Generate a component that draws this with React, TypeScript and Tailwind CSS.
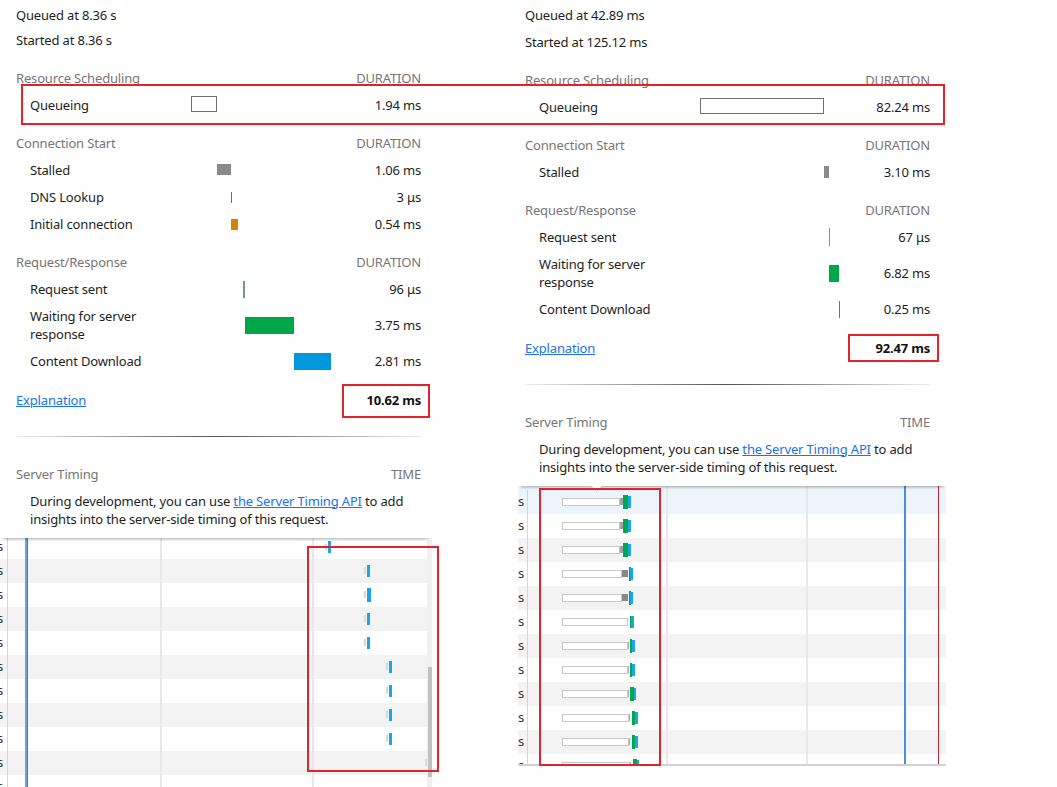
import React from "react";

type Bar = { l: number; w: number; h: number; c?: string; box?: boolean; dy?: number };
type RowData = { label: React.ReactNode; value: string; bars: Bar[] };
type Section = { title: string; rows: RowData[] };

function TimingRow({ r }: { r: RowData }) {
  return (
    <div className="flex items-center py-[4.5px] leading-[18px]">
      <div className="w-[175px] shrink-0 pl-[14px]">{r.label}</div>
      <div className="relative h-[18px] w-[140px] shrink-0">
        {r.bars.map((b, i) =>
          b.box ? (
            <div
              key={i}
              className="absolute top-1/2 border border-[#707070] bg-white"
              style={{ left: b.l, width: b.w, height: b.h, marginTop: -b.h / 2 + (b.dy ?? 0) }}
            />
          ) : (
            <div
              key={i}
              className="absolute top-1/2"
              style={{ left: b.l, width: b.w, height: b.h, marginTop: -b.h / 2 + (b.dy ?? 0), background: b.c }}
            />
          )
        )}
      </div>
      <div className="flex-1 text-right">{r.value}</div>
    </div>
  );
}

function Header({ title, right, mt }: { title: string; right: string; mt: string }) {
  return (
    <div className={`flex justify-between py-[4.5px] leading-[18px] text-[#767676] ${mt}`}>
      <span>{title}</span>
      <span>{right}</span>
    </div>
  );
}

function Popover({
  queued,
  started,
  startedMt,
  sections,
  total,
  pad,
  arrow,
}: {
  queued: string;
  started: string;
  startedMt: string;
  sections: Section[];
  total: string;
  pad: string;
  arrow?: boolean;
}) {
  return (
    <div className={`relative z-10 bg-white pb-[10px] pt-[6px] shadow-[0_4px_3px_-3px_rgba(0,0,0,0.35)] ${pad}`}>
      <div className="w-[405px]">
        <div className="leading-[18px]">{queued}</div>
        <div className={`leading-[18px] ${startedMt}`}>{started}</div>
        {sections.map((s, i) => (
          <div key={i}>
            <Header title={s.title} right="DURATION" mt={i === 0 ? "mt-[15.5px]" : "mt-[11px]"} />
            {s.rows.map((r, j) => (
              <TimingRow key={j} r={r} />
            ))}
          </div>
        ))}
        <div className="mt-[12px] flex justify-between py-[4.5px] leading-[18px]">
          <a className="text-[#1a73e8] underline">Explanation</a>
          <span className="font-bold text-[#111]">{total}</span>
        </div>
        <div className="mt-[22px] h-px w-full bg-linear-to-r from-[#eeeeee] via-[#555555] to-[#eeeeee]" />
        <Header title="Server Timing" right="TIME" mt="mt-[23.5px]" />
        <div className="pl-[14px] pt-[4.5px] leading-[18px]">
          During development, you can use{" "}
          <a className="text-[#1a73e8] underline">the Server Timing API</a> to add
          <br />
          insights into the server-side timing of this request.
        </div>
      </div>
      {arrow && (
        <svg className="absolute bottom-[-7px] left-[72px]" width="13" height="8" viewBox="0 0 13 8">
          <polygon points="0,0 13,0 6.5,7" fill="#ffffff" />
          <path d="M0.5 0.5 L6.5 6.5 L12.5 0.5" fill="none" stroke="#d0d0d0" strokeWidth="1" />
        </svg>
      )}
    </div>
  );
}

const leftSections: Section[] = [
  {
    title: "Resource Scheduling",
    rows: [{ label: "Queueing", value: "1.94 ms", bars: [{ l: 0, w: 26, h: 16, box: true, dy: -1.5 }] }],
  },
  {
    title: "Connection Start",
    rows: [
      { label: "Stalled", value: "1.06 ms", bars: [{ l: 26, w: 14, h: 11, c: "#8a8a8a", dy: -0.5 }] },
      { label: "DNS Lookup", value: "3 μs", bars: [{ l: 40, w: 1, h: 11, c: "#1d8f80" }] },
      { label: "Initial connection", value: "0.54 ms", bars: [{ l: 40, w: 7, h: 11, c: "#d98200" }] },
    ],
  },
  {
    title: "Request/Response",
    rows: [
      { label: "Request sent", value: "96 μs", bars: [{ l: 52, w: 2, h: 17, c: "#6f9a9a" }] },
      {
        label: (
          <>
            Waiting for server
            <br />
            response
          </>
        ),
        value: "3.75 ms",
        bars: [{ l: 54, w: 49, h: 17, c: "#00a748" }],
      },
      { label: "Content Download", value: "2.81 ms", bars: [{ l: 103, w: 37, h: 17, c: "#0097dd" }] },
    ],
  },
];

const rightSections: Section[] = [
  {
    title: "Resource Scheduling",
    rows: [{ label: "Queueing", value: "82.24 ms", bars: [{ l: 0, w: 124, h: 16, box: true, dy: -1 }] }],
  },
  {
    title: "Connection Start",
    rows: [{ label: "Stalled", value: "3.10 ms", bars: [{ l: 124, w: 5, h: 12, c: "#8a8a8a" }] }],
  },
  {
    title: "Request/Response",
    rows: [
      { label: "Request sent", value: "67 μs", bars: [{ l: 129, w: 1, h: 18, c: "#6f9a9a" }] },
      {
        label: (
          <>
            Waiting for server
            <br />
            response
          </>
        ),
        value: "6.82 ms",
        bars: [{ l: 129, w: 10, h: 17, c: "#00a748" }],
      },
      { label: "Content Download", value: "0.25 ms", bars: [{ l: 139, w: 1, h: 17, c: "#0097dd" }] },
    ],
  },
];

type WBar = { l: number; w: number; h: number; c?: string; box?: boolean };

const leftRows: WBar[][] = [
  [
    { l: 317, w: 2, h: 6, c: "#d9d9d9" },
    { l: 320, w: 3, h: 12, c: "#17a5ec" },
  ],
  ...[0, 1, 2, 3].map((i) => [
    { l: 356, w: 2, h: 7, c: "#d9d9d9" },
    { l: 359, w: i === 1 ? 4 : 3, h: i === 1 ? 14 : 12, c: "#17a5ec" },
  ]),
  ...[0, 1, 2, 3].map(() => [
    { l: 378, w: 2, h: 7, c: "#d9d9d9" },
    { l: 381, w: 3, h: 12, c: "#17a5ec" },
  ]),
  [{ l: 417, w: 2, h: 7, c: "#d9d9d9" }],
  [],
];

function WBars({ bars }: { bars: WBar[] }) {
  return (
    <>
      {bars.map((b, i) =>
        b.box ? (
          <div
            key={i}
            className="absolute top-1/2 border border-[#c8c8c8] bg-white"
            style={{ left: b.l, width: b.w, height: b.h, marginTop: -b.h / 2 }}
          />
        ) : (
          <div
            key={i}
            className="absolute top-1/2"
            style={{ left: b.l, width: b.w, height: b.h, marginTop: -b.h / 2, background: b.c }}
          />
        )
      )}
    </>
  );
}

function LeftWaterfall() {
  return (
    <div className="flex h-[249px] w-[432px]">
      <div className="relative w-[427px] overflow-hidden">
        <div className="-mt-[3px] flex flex-col">
          {leftRows.map((bars, i) => (
            <div key={i} className={`flex h-[24px] ${i % 2 === 1 ? "bg-[#f3f3f3]" : "bg-white"}`}>
              <div className="flex w-[8px] shrink-0 items-center overflow-hidden border-r border-[#d6d6d6] text-[#333]">
                <span className="-ml-[3px]">s</span>
              </div>
              <div className="relative flex-1">
                <WBars bars={bars} />
              </div>
            </div>
          ))}
        </div>
        <div className="absolute bottom-0 left-[160px] top-0 w-[2px] bg-[#e8e8e8]" />
        <div className="absolute bottom-0 left-[312px] top-0 w-[2px] bg-[#e8e8e8]" />
        <div className="absolute bottom-0 left-[25px] top-0 w-[2px] bg-[#6fa0e2]" />
        <div className="absolute bottom-0 left-[27px] top-0 w-px bg-[#e0474a]" />
      </div>
      <div className="w-[5px] bg-[#f0f0f0] pl-[1px]">
        <div className="mt-[129px] h-[110px] w-[4px] bg-[#c1c1c1]" />
      </div>
    </div>
  );
}

const rightRows: WBar[][] = (() => {
  const r: WBar[][] = [];
  const spec: [number, number, string, number, number, number, number, number][] = [
    [102, 3, "#a0a0a0", 105, 5, 110, 3, 14],
    [102, 3, "#a0a0a0", 105, 5, 110, 3, 14],
    [102, 3, "#a0a0a0", 105, 5, 110, 3, 14],
    [104, 6, "#888888", 111, 2, 112, 3, 14],
    [104, 6, "#888888", 111, 2, 112, 3, 14],
    [110, 0, "#a0a0a0", 112, 1, 113, 3, 12],
    [110, 1, "#b0b0b0", 112, 2, 114, 3, 14],
    [110, 1, "#b0b0b0", 112, 2, 114, 3, 14],
    [110, 1, "#b0b0b0", 112, 4, 116, 2, 14],
    [111, 1, "#b0b0b0", 114, 3, 117, 3, 14],
    [111, 1, "#b0b0b0", 114, 3, 117, 3, 14],
    [112, 1, "#b0b0b0", 115, 4, 119, 2, 14],
  ];
  for (const [be, gw, gc, gl, gW, bl, bw, gh] of spec) {
    const row: WBar[] = [{ l: 44, w: be - 44, h: 8, box: true }];
    if (gw > 0) row.push({ l: be, w: gw, h: 7, c: gc });
    row.push({ l: gl, w: gW, h: gh, c: "#00a84c" });
    row.push({ l: bl, w: bw, h: 12, c: "#19a6ee" });
    r.push(row);
  }
  return r;
})();

function RightWaterfall() {
  return (
    <div className="relative h-[280px] w-[428px] overflow-hidden border-b-2 border-[#d2d2d2]">
      <div className="flex flex-col">
        {rightRows.map((bars, i) => (
          <div
            key={i}
            className={`flex ${i === 0 ? "h-[28px] bg-[#eef4fc] pt-[4px]" : "h-[24px]"} ${
              i > 0 && i % 2 === 0 ? "bg-[#f3f3f3]" : ""
            } ${i > 0 && i % 2 === 1 ? "bg-white" : ""}`}
          >
            <div className="flex w-[10px] shrink-0 items-center overflow-hidden border-r border-[#d6d6d6] text-[#333]">
              <span>s</span>
            </div>
            <div className="relative flex-1">
              <WBars bars={bars.map((b) => ({ ...b, l: b.l - 10 }))} />
            </div>
          </div>
        ))}
      </div>
      <div className="absolute bottom-0 left-[148px] top-0 w-[2px] bg-[#e8e8e8]" />
      <div className="absolute bottom-0 left-[288px] top-0 w-[2px] bg-[#e8e8e8]" />
      <div className="absolute bottom-0 left-[386px] top-0 w-[2px] bg-[#4a8ddf]" />
      <div className="absolute bottom-0 left-[420px] top-0 w-px bg-[#c0282d]" />
    </div>
  );
}

export default function App() {
  return (
    <div className="relative flex h-[787px] w-[1057px] overflow-hidden bg-white font-['Noto_Sans',sans-serif] text-[13px] tracking-[-0.17px] text-[#1e1e1e]">
      <div className="w-[518px] shrink-0">
        <div className="w-[430px]">
          <Popover
            queued="Queued at 8.36 s"
            started="Started at 8.36 s"
            startedMt="mt-[7px]"
            sections={leftSections}
            total="10.62 ms"
            pad="pl-[16px] pr-[9px]"
          />
        </div>
        <LeftWaterfall />
      </div>
      <div className="w-[428px] shrink-0">
        <Popover
          queued="Queued at 42.89 ms"
          started="Started at 125.12 ms"
          startedMt="mt-[9px]"
          sections={rightSections}
          total="92.47 ms"
          pad="pl-[7px] pr-[16px]"
          arrow
        />
        <RightWaterfall />
      </div>

      <div className="pointer-events-none absolute left-[21px] top-[84px] z-20 h-[41px] w-[924px] border-2 border-[#e3222b]" />
      <div className="pointer-events-none absolute left-[342px] top-[384px] z-20 h-[34px] w-[88px] border-2 border-[#e3222b]" />
      <div className="pointer-events-none absolute left-[848px] top-[334px] z-20 h-[28px] w-[91px] border-2 border-[#e3222b]" />
      <div className="pointer-events-none absolute left-[307px] top-[546px] z-20 h-[226px] w-[132px] border-2 border-[#e3222b]" />
      <div className="pointer-events-none absolute left-[539px] top-[488px] z-20 h-[278px] w-[122px] border-2 border-[#e3222b]" />
    </div>
  );
}
